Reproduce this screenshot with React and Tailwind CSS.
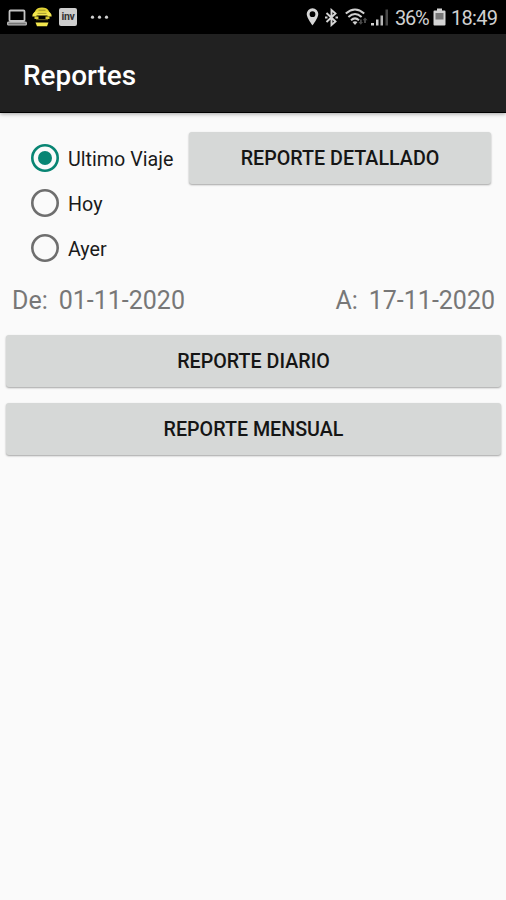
import React, { useState } from 'react';

const options = ['Ultimo Viaje', 'Hoy', 'Ayer'];

// Android status bar, notifications on the left and system icons on the right
function StatusBar() {
    return (
        <div className="flex h-[34px] items-center bg-black pl-[7px] pr-[8px] text-[#d0d0d0]">
            <svg width="20" height="17" viewBox="0 0 20 17" fill="none" stroke="#c4c4c4">
                <rect x="2.5" y="1.5" width="15" height="10.5" rx="1" strokeWidth="1.8" />
                <rect x="0.7" y="13.2" width="18.6" height="2.8" rx="0.8" strokeWidth="1.2" fill="#777" />
            </svg>
            <svg className="ml-[5px]" width="20" height="20" viewBox="0 0 20 20">
                <path d="M3.5 3.5Q5 0.5 10 0.5T16.5 3.5L18 6H2Z" fill="#e3d536" />
                <path d="M0.3 9.5Q0.5 5 4 5H16Q19.5 5 19.7 9.5H15.5V8.5H4.5V9.5Z" fill="#f3e64d" />
                <path d="M6.5 3.2H13.5M5.5 6.3H14.5" stroke="#8a7e25" strokeWidth="0.8" />
                <path d="M2.5 9.5H6.5V12H2.5ZM13.5 9.5H17.5V12H13.5Z" fill="#d6c935" />
                <path d="M4 12H16V13.2H4Z" fill="#5e5719" />
                <path d="M3.5 15.5H16.5L15 19.3H5Z" fill="#f3e64d" />
            </svg>
            <div className="ml-[7px] flex h-[18px] w-[18px] items-center justify-center rounded-[2px] bg-[#cecece] text-[10.5px] leading-none font-bold tracking-[-0.4px] text-[#333]">
                inv
            </div>
            <svg className="ml-[13px]" width="19" height="5" viewBox="0 0 19 5" fill="#cfcfcf">
                <circle cx="2.5" cy="2.2" r="1.6" />
                <circle cx="9.5" cy="2.2" r="1.6" />
                <circle cx="16.5" cy="2.2" r="1.6" />
            </svg>

            <div className="ml-auto flex items-center">
                <svg width="13" height="18" viewBox="0 0 12 18">
                    <path d="M6 0.3A5.8 5.8 0 0 0 0.2 6.1C0.2 10 6 17.5 6 17.5S11.8 10 11.8 6.1A5.8 5.8 0 0 0 6 0.3ZM6 3.3A2.9 2.9 0 1 1 6 9.1A2.9 2.9 0 0 1 6 3.3Z" fill="#d6d6d6" fillRule="evenodd" />
                </svg>
                <svg className="ml-[6px]" width="13" height="19" viewBox="0 0 13 19" fill="none" stroke="#d6d6d6" strokeWidth="1.9">
                    <path d="M1.5 5L10.5 13.5L6.5 17V2L10.5 5.5L1.5 14" />
                    <path d="M0 9.5H2.5M10.5 9.5H13" />
                </svg>
                <svg className="ml-[7px]" width="23" height="18" viewBox="0 0 23 18" fill="none" stroke="#d0d0d0" strokeWidth="2">
                    <path d="M0.8 5.5Q10 -2.5 19.2 5.5" />
                    <path d="M3.4 8.9Q10 3.1 16.6 8.9" />
                    <path d="M6 12.2Q10 8.6 14 12.2" />
                    <path d="M7.5 14Q10 12.3 12.5 14L10 17Z" fill="#d0d0d0" stroke="none" />
                    <path d="M15 11.5V14H13.5L15.8 16.8L18 14H16.8V11.5ZM20 9.5L22.5 12.3H21V15H19V12.3H17.7Z" fill="#484848" stroke="none" />
                </svg>
                <svg className="ml-[3px] mr-px" width="18" height="18" viewBox="0.5 0 18 18">
                    <path d="M0.5 15H3.5V17.5H0.5Z" fill="#d0d0d0" />
                    <path d="M5.5 11.5H8V17.5H5.5Z" fill="#d0d0d0" />
                    <path d="M10 7.5H12.5V17.5H10Z" fill="#b5b5b5" />
                    <path d="M15 1.5H17.5V17.5H15Z" fill="#484848" />
                </svg>
                <span className="ml-[5px] w-[34px] pt-px text-[20px] leading-none tracking-[-1.2px] whitespace-nowrap">36%</span>
                <svg className="ml-[4px]" width="13" height="18" viewBox="0 0 13 18">
                    <path d="M4 0.5H9V2.5H11.5Q12.5 2.5 12.5 3.5V16.5Q12.5 17.5 11.5 17.5H1.5Q0.5 17.5 0.5 16.5V3.5Q0.5 2.5 1.5 2.5H4Z" fill="#d4d4d4" />
                    <path d="M2.5 5H10.5V11.5H2.5Z" fill="#777" />
                </svg>
                <span className="ml-[5px] w-[47px] pt-px text-[20px] leading-none tracking-[-0.7px] whitespace-nowrap">18:49</span>
            </div>
        </div>
    );
}

function ReportButton({ children, className = '' }) {
    return (
        <button
            className={`flex h-[52px] items-center justify-center rounded-[3px] bg-[#d6d8d7] pt-[2px] text-[19.7px] font-medium text-[#151515] shadow-[0_1px_2px_rgba(0,0,0,0.35)] ${className}`}
        >
            {children}
        </button>
    );
}

function App() {
    const [selected, setSelected] = useState('Ultimo Viaje');

    return (
        <div className="min-h-screen bg-[#fafafa] font-['Roboto',sans-serif]">
            <StatusBar />
            <header className="flex h-[79px] items-center border-b border-black bg-[#212121] pl-[23px] pt-[6px] shadow-[0_1px_4px_rgba(0,0,0,0.35)]">
                <h1 className="text-[27.9px] leading-none font-medium text-white">Reportes</h1>
            </header>

            <main>
                <div className="flex items-start pt-[19px] pr-[15px] pl-[31px]">
                    {/* Trip period */}
                    <div className="mt-[3px] w-[158px] shrink-0" role="radiogroup">
                        {options.map((option) => (
                            <label key={option} className="flex h-[45px] items-center">
                                <input
                                    type="radio"
                                    name="period"
                                    className="sr-only"
                                    checked={selected === option}
                                    onChange={() => setSelected(option)}
                                />
                                <svg width="28" height="28" viewBox="0 0 28 28" className={selected === option ? 'text-[#088573]' : 'text-[#6e6e6e]'}>
                                    <circle cx="14" cy="14" r="12.7" fill="none" stroke="currentColor" strokeWidth="2.6" />
                                    {selected === option && <circle cx="14" cy="14" r="7" fill="currentColor" />}
                                </svg>
                                <span className="ml-[9px] pt-[4px] text-[19.7px] whitespace-nowrap text-[#1a1a1a]">{option}</span>
                            </label>
                        ))}
                    </div>
                    <ReportButton className="flex-1">REPORTE DETALLADO</ReportButton>
                </div>

                {/* Date range */}
                <div className="mt-[15px] flex justify-between pr-[11px] pl-[12px] text-[25px] leading-[32px] text-[#777]">
                    <div className="flex gap-[11px]">
                        <span>De:</span>
                        <span>01-11-2020</span>
                    </div>
                    <div className="flex gap-[11px]">
                        <span>A:</span>
                        <span>17-11-2020</span>
                    </div>
                </div>

                <div className="mt-[18px] flex flex-col gap-[16px] pr-[5px] pl-[6px]">
                    <ReportButton>REPORTE DIARIO</ReportButton>
                    <ReportButton>REPORTE MENSUAL</ReportButton>
                </div>
            </main>
        </div>
    );
}

export default App;
